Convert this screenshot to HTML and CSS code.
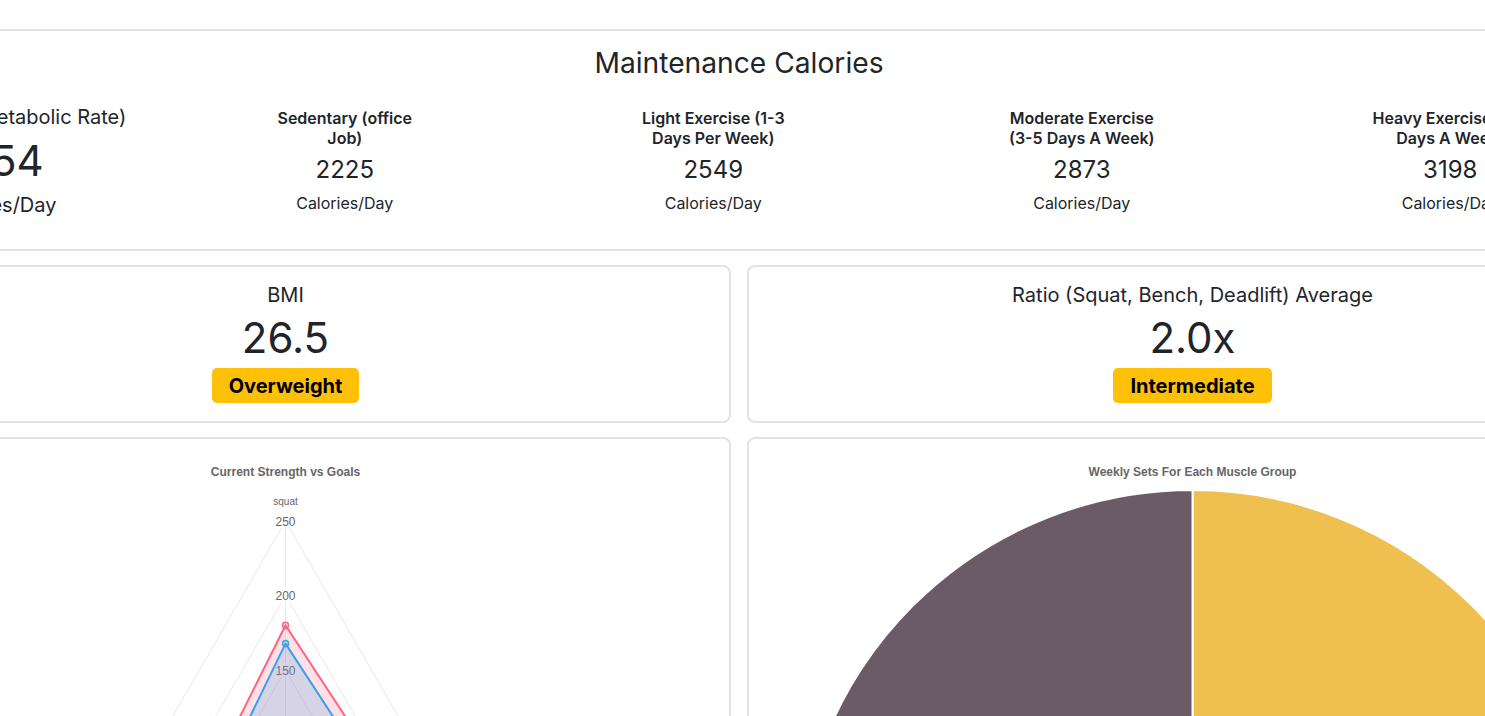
FILE: index.html
```html
<!DOCTYPE html>
<html lang="en">
<head>
<meta charset="utf-8">
<title>Dashboard</title>
<link rel="stylesheet" href="styles.css">
</head>
<body>
<div class="page">
  <section class="card top-card">
    <h3 class="top-title">Maintenance Calories</h3>
    <div class="cal-row">
      <div class="cal-col cal-col-main">
        <h5 class="main-label">BMR (Basal Metabolic Rate)</h5>
        <div class="main-value">1854</div>
        <div class="main-unit">Calories/Day</div>
      </div>
      <div class="cal-col">
        <h6 class="cal-label">Sedentary (office Job)</h6>
        <div class="cal-value">2225</div>
        <div class="cal-unit">Calories/Day</div>
      </div>
      <div class="cal-col">
        <h6 class="cal-label">Light Exercise (1-3 Days Per Week)</h6>
        <div class="cal-value">2549</div>
        <div class="cal-unit">Calories/Day</div>
      </div>
      <div class="cal-col">
        <h6 class="cal-label">Moderate Exercise (3-5 Days A Week)</h6>
        <div class="cal-value">2873</div>
        <div class="cal-unit">Calories/Day</div>
      </div>
      <div class="cal-col">
        <h6 class="cal-label">Heavy Exercise (6-7 Days A Week)</h6>
        <div class="cal-value">3198</div>
        <div class="cal-unit">Calories/Day</div>
      </div>
    </div>
  </section>

  <div class="grid">
    <section class="card stat-card">
      <div class="stat-title">BMI</div>
      <div class="stat-value">26.5</div>
      <span class="badge">Overweight</span>
    </section>
    <section class="card stat-card">
      <div class="stat-title">Ratio (Squat, Bench, Deadlift) Average</div>
      <div class="stat-value">2.0x</div>
      <span class="badge">Intermediate</span>
    </section>

    <section class="card chart-card">
      <svg class="chart" width="855" height="860" viewBox="0 0 855 860">
        <text class="chart-title" x="427.5" y="21" text-anchor="middle">Current Strength vs Goals</text>
        <g class="grid-lines" fill="none" stroke="#e8e8e8" stroke-width="1">
          <polygon points="427.5,66 750.1,624.75 104.9,624.75"/>
          <polygon points="427.5,140.5 685.6,587.5 169.4,587.5"/>
          <polygon points="427.5,215 621.1,550.25 233.9,550.25"/>
          <polygon points="427.5,289.5 556.5,513 298.5,513"/>
          <polygon points="427.5,364 492,475.75 363,475.75"/>
          <line x1="427.5" y1="438.5" x2="427.5" y2="66"/>
          <line x1="427.5" y1="438.5" x2="750.1" y2="624.75"/>
          <line x1="427.5" y1="438.5" x2="104.9" y2="624.75"/>
        </g>
        <g class="ticks">
          <rect x="415" y="59" width="25" height="14" fill="rgba(255,255,255,0.75)"/>
          <text x="427.5" y="70.5" text-anchor="middle">250</text>
          <rect x="415" y="133.5" width="25" height="14" fill="rgba(255,255,255,0.75)"/>
          <text x="427.5" y="145" text-anchor="middle">200</text>
          <rect x="415" y="208" width="25" height="14" fill="rgba(255,255,255,0.75)"/>
          <text x="427.5" y="219.5" text-anchor="middle">150</text>
          <rect x="415" y="282.5" width="25" height="14" fill="rgba(255,255,255,0.75)"/>
          <text x="427.5" y="294" text-anchor="middle">100</text>
          <rect x="419" y="357" width="17" height="14" fill="rgba(255,255,255,0.75)"/>
          <text x="427.5" y="368.5" text-anchor="middle">50</text>
        </g>
        <text class="point-label" x="427.5" y="50" text-anchor="middle">squat</text>
        <polygon points="427.5,170.3 710.1,601.4 239.6,547" fill="rgba(255,99,132,0.2)" stroke="rgb(255,99,132)" stroke-width="2" stroke-linejoin="round"/>
        <polygon points="427.5,188.6 688.9,589.4 258.9,535.9" fill="rgba(54,162,235,0.2)" stroke="rgb(54,162,235)" stroke-width="2" stroke-linejoin="round"/>
        <g stroke-width="1.5">
          <circle cx="427.5" cy="170.3" r="3" fill="rgba(255,99,132,0.2)" stroke="rgb(255,99,132)"/>
          <circle cx="710.1" cy="601.4" r="3" fill="rgba(255,99,132,0.2)" stroke="rgb(255,99,132)"/>
          <circle cx="239.6" cy="547" r="3" fill="rgba(255,99,132,0.2)" stroke="rgb(255,99,132)"/>
          <circle cx="427.5" cy="188.6" r="3" fill="rgba(54,162,235,0.2)" stroke="rgb(54,162,235)"/>
          <circle cx="688.9" cy="589.4" r="3" fill="rgba(54,162,235,0.2)" stroke="rgb(54,162,235)"/>
          <circle cx="258.9" cy="535.9" r="3" fill="rgba(54,162,235,0.2)" stroke="rgb(54,162,235)"/>
        </g>
      </svg>
    </section>

    <section class="card chart-card">
      <svg class="chart" width="855" height="860" viewBox="0 0 855 860">
        <text class="chart-title" x="427.5" y="21" text-anchor="middle">Weekly Sets For Each Muscle Group</text>
        <g stroke="#ffffff" stroke-width="2" stroke-linejoin="round">
          <path d="M427.5,430.7 L427.5,35 A395.7,395.7 0 0 1 823.2,430.7 Z" fill="#efbf50"/>
          <path d="M427.5,430.7 L823.2,430.7 A395.7,395.7 0 0 1 427.5,826.4 Z" fill="#4f9d9a"/>
          <path d="M427.5,430.7 L427.5,826.4 A395.7,395.7 0 0 1 31.8,430.7 Z" fill="#d9534f"/>
          <path d="M427.5,430.7 L31.8,430.7 A395.7,395.7 0 0 1 427.5,35 Z" fill="#6b5b66"/>
        </g>
      </svg>
    </section>
  </div>
</div>
</body>
</html>
```

FILE: styles.css
```css
* {
  box-sizing: border-box;
}

html, body {
  margin: 0;
  padding: 0;
  background: #ffffff;
  overflow: hidden;
}

body {
  font-family: Inter, "Noto Sans", sans-serif;
  color: #212529;
}

.page {
  width: 1798px;
  margin-left: -160px;
  padding-top: 29px;
}

.card {
  background: #ffffff;
  border: 2px solid #e0e3e7;
  border-radius: 8px;
}

.top-card {
  margin: 0 -23px 14px -23px;
  padding: 15px 0 32px 0;
}

.top-title {
  margin: 0;
  font-size: 28.2px;
  font-weight: 400;
  line-height: 34px;
  text-align: center;
}

.cal-row {
  display: flex;
  align-items: flex-start;
  margin-top: 25px;
}

.cal-col {
  flex: 0 0 368.5px;
  display: flex;
  flex-direction: column;
  align-items: center;
  text-align: center;
  padding-top: 3px;
}

.cal-col-main {
  flex: 0 0 341.5px;
  padding-top: 0;
  padding-left: 12px;
}

.main-label {
  margin: 0;
  font-size: 20px;
  font-weight: 400;
  line-height: 24px;
  white-space: nowrap;
}

.main-value {
  margin-top: 7px;
  font-size: 42px;
  line-height: 50px;
}

.main-unit {
  margin-top: 7px;
  font-size: 20px;
  line-height: 24px;
}

.cal-label {
  margin: 0;
  max-width: 160px;
  font-size: 16px;
  font-weight: 600;
  line-height: 20px;
}

.cal-value {
  margin-top: 7px;
  font-size: 24px;
  line-height: 29px;
}

.cal-unit {
  margin-top: 7px;
  font-size: 16px;
  line-height: 24px;
}

.grid {
  display: grid;
  grid-template-columns: 1fr 1fr;
  gap: 14px 16px;
}

.stat-card {
  display: flex;
  flex-direction: column;
  align-items: center;
  padding: 16px 16px 18px 16px;
  text-align: center;
}

.stat-title {
  font-size: 20px;
  line-height: 24px;
}

.stat-value {
  margin-top: 6px;
  font-size: 42px;
  line-height: 50px;
}

.badge {
  margin-top: 5px;
  padding: 6px 17px 5px;
  background: #ffc107;
  color: #000000;
  border-radius: 5px;
  font-size: 20px;
  font-weight: 700;
  line-height: 24px;
}

.chart-card {
  padding: 16px;
}

.chart {
  display: block;
}

.chart-title {
  font-family: "Liberation Sans", Arial, sans-serif;
  font-size: 12px;
  font-weight: 700;
  fill: #666666;
}

.ticks text {
  font-family: "Liberation Sans", Arial, sans-serif;
  font-size: 12px;
  fill: #666666;
}

.point-label {
  font-family: "Liberation Sans", Arial, sans-serif;
  font-size: 10px;
  fill: #666666;
}
```
